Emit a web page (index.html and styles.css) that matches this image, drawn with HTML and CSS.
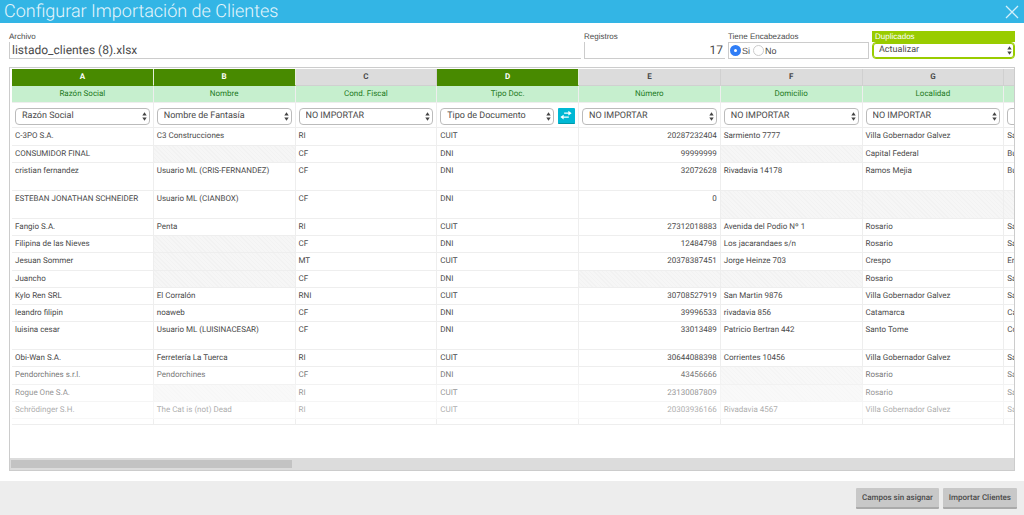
FILE: index.html
```
<!DOCTYPE html>
<html lang="es">
<head>
<meta charset="utf-8">
<title>Configurar Importación de Clientes</title>
<meta name="viewport" content="width=device-width, initial-scale=1">
<link rel="stylesheet" href="styles.css">
</head>
<body>
<svg class="symbols" aria-hidden="true">
  <symbol id="arrows" viewBox="0 0 5 9"><path d="M2.5 0.3 4.7 3.6H.3zM2.5 8.7 4.7 5.4H.3z" fill="#444"/></symbol>
</svg>
<header class="titlebar">
  <h1>Configurar Importación de Clientes</h1>
  <button class="close" type="button" aria-label="Cerrar"><svg viewBox="0 0 14 14"><path d="M1 1 13 13M13 1 1 13" stroke="#d4f0fb" stroke-width="1.3" fill="none"/></svg></button>
</header>
<main class="content">
  <form class="fields">
    <div class="field">
      <label for="archivo">Archivo</label>
      <input class="box" id="archivo" type="text" value="listado_clientes (8).xlsx" readonly>
    </div>
    <div class="field">
      <label for="registros">Registros</label>
      <input class="box right" id="registros" type="text" value="17" readonly>
    </div>
    <fieldset class="field">
      <legend>Tiene Encabezados</legend>
      <div class="box radios">
        <input type="radio" name="enc" id="si" checked><label for="si">Si</label>
        <input type="radio" name="enc" id="no"><label for="no">No</label>
      </div>
    </fieldset>
    <div class="field active">
      <label for="dup">Duplicados</label>
      <span class="select"><select id="dup"><option>Actualizar</option></select><svg><use href="#arrows"/></svg></span>
    </div>
  </form>
  <section class="sheet">
    <div class="viewport">
      <table>
        <thead>
          <tr class="letters"><th class="on">A</th><th class="on">B</th><th>C</th><th class="on">D</th><th>E</th><th>F</th><th>G</th><th></th></tr>
          <tr class="names"><th>Razón Social</th><th>Nombre</th><th>Cond. Fiscal</th><th>Tipo Doc.</th><th>Número</th><th>Domicilio</th><th>Localidad</th><th></th></tr>
          <tr class="mapping">
            <td><span class="select"><select aria-label="Columna A"><option>Razón Social</option></select><svg><use href="#arrows"/></svg></span></td>
            <td><span class="select"><select aria-label="Columna B"><option>Nombre de Fantasía</option></select><svg><use href="#arrows"/></svg></span></td>
            <td><span class="select"><select aria-label="Columna C"><option>NO IMPORTAR</option></select><svg><use href="#arrows"/></svg></span></td>
            <td><div class="pair"><span class="select"><select aria-label="Columna D"><option>Tipo de Documento</option></select><svg><use href="#arrows"/></svg></span><button class="swap" type="button" aria-label="Asignar valores"><svg viewBox="0 0 16 16"><path d="M6 5.500h5M5 9.700h6" stroke="#fff" stroke-width="1.300"/><path d="M10.500 3 14 5.500 10.500 8zM5.500 7.200 2 9.700l3.500 2.500z" fill="#fff"/></svg></button></div></td>
            <td><span class="select"><select aria-label="Columna E"><option>NO IMPORTAR</option></select><svg><use href="#arrows"/></svg></span></td>
            <td><span class="select"><select aria-label="Columna F"><option>NO IMPORTAR</option></select><svg><use href="#arrows"/></svg></span></td>
            <td><span class="select"><select aria-label="Columna G"><option>NO IMPORTAR</option></select><svg><use href="#arrows"/></svg></span></td>
            <td><span class="select"><select aria-label="Columna H"><option></option></select><svg><use href="#arrows"/></svg></span></td>
          </tr>
        </thead>
        <tbody>
          <tr><td>C-3PO S.A.</td><td>C3 Construcciones</td><td>RI</td><td>CUIT</td><td>20287232404</td><td>Sarmiento 7777</td><td>Villa Gobernador Galvez</td><td>Sa</td></tr>
          <tr><td>CONSUMIDOR FINAL</td><td></td><td>CF</td><td>DNI</td><td>99999999</td><td></td><td>Capital Federal</td><td>Bu</td></tr>
          <tr class="tall"><td>cristian fernandez</td><td>Usuario ML (CRIS-FERNANDEZ)</td><td>CF</td><td>DNI</td><td>32072628</td><td>Rivadavia 14178</td><td>Ramos Mejia</td><td>Bu</td></tr>
          <tr class="tall"><td>ESTEBAN JONATHAN SCHNEIDER</td><td>Usuario ML (CIANBOX)</td><td>CF</td><td>DNI</td><td>0</td><td></td><td></td><td></td></tr>
          <tr><td>Fangio S.A.</td><td>Penta</td><td>RI</td><td>CUIT</td><td>27312018883</td><td>Avenida del Podio Nº 1</td><td>Rosario</td><td>Sa</td></tr>
          <tr><td>Filipina de las Nieves</td><td></td><td>CF</td><td>DNI</td><td>12484798</td><td>Los jacarandaes s/n</td><td>Rosario</td><td>Sa</td></tr>
          <tr><td>Jesuan Sommer</td><td></td><td>MT</td><td>CUIT</td><td>20378387451</td><td>Jorge Heinze 703</td><td>Crespo</td><td>En</td></tr>
          <tr><td>Juancho</td><td></td><td>CF</td><td>DNI</td><td></td><td></td><td>Rosario</td><td>Sa</td></tr>
          <tr><td>Kylo Ren SRL</td><td>El Corralón</td><td>RNI</td><td>CUIT</td><td>30708527919</td><td>San Martin 9876</td><td>Villa Gobernador Galvez</td><td>Sa</td></tr>
          <tr><td>leandro filipin</td><td>noaweb</td><td>CF</td><td>DNI</td><td>39996533</td><td>rivadavia 856</td><td>Catamarca</td><td>Ca</td></tr>
          <tr class="tall"><td>luisina cesar</td><td>Usuario ML (LUISINACESAR)</td><td>CF</td><td>DNI</td><td>33013489</td><td>Patricio Bertran 442</td><td>Santo Tome</td><td>Co</td></tr>
          <tr><td>Obi-Wan S.A.</td><td>Ferretería La Tuerca</td><td>RI</td><td>CUIT</td><td>30644088398</td><td>Corrientes 10456</td><td>Villa Gobernador Galvez</td><td>Sa</td></tr>
          <tr class="fade1"><td>Pendorchines s.r.l.</td><td>Pendorchines</td><td>CF</td><td>DNI</td><td>43456666</td><td></td><td>Rosario</td><td>Sa</td></tr>
          <tr class="fade2"><td>Rogue One S.A.</td><td></td><td>RI</td><td>CUIT</td><td>23130087809</td><td></td><td>Rosario</td><td>Sa</td></tr>
          <tr class="fade3"><td>Schrödinger S.H.</td><td>The Cat is (not) Dead</td><td>RI</td><td>CUIT</td><td>20303936166</td><td>Rivadavia 4567</td><td>Villa Gobernador Galvez</td><td>Sa</td></tr>
        </tbody>
        <tfoot><tr><td></td><td></td><td></td><td></td><td></td><td></td><td></td><td></td></tr></tfoot>
      </table>
    </div>
    <div class="scrollbar"><div class="thumb"></div></div>
  </section>
</main>
<footer class="actions">
  <button type="button">Campos sin asignar</button>
  <button type="button">Importar Clientes</button>
</footer>
</body>
</html>
```
FILE: styles.css
```
* { box-sizing: border-box; }
body {
  margin: 0;
  min-height: 100vh;
  display: flex;
  flex-direction: column;
  background: #fff;
  color: #4a4a4a;
  font-family: Roboto, "Liberation Sans", sans-serif;
  font-size: 8px;
  text-rendering: geometricPrecision;
}
button, input, select { font-family: inherit; color: inherit; margin: 0; text-rendering: inherit; }
.symbols { display: none; }
.titlebar {
  display: flex;
  align-items: center;
  justify-content: space-between;
  height: 23px;
  padding: 0 5px 0 4px;
  background: #33b5e5;
}
.titlebar h1 { margin: 0; font-size: 18px; font-weight: 300; line-height: 23px; color: #e6f6fc; }
.close { width: 14px; height: 14px; padding: 0; border: 0; background: none; }
.close svg { display: block; }
.content { flex: 1; display: flex; flex-direction: column; padding: 8px 9px 10px; }
.fields { display: grid; grid-template-columns: 1fr 141px 141px 143px; gap: 3px; margin: 0 0 8px; }
.field { min-width: 0; margin: 0; padding: 0; border: 0; }
.field > label, legend {
  display: block;
  width: 100%;
  height: 11px;
  padding: 0;
  line-height: 11px;
  font-family: "Liberation Sans", sans-serif;
}
.box {
  display: block;
  width: 100%;
  height: 17px;
  padding: 0 2px;
  border: 1px solid #ccc;
  border-width: 0 0 1px 1px;
  background: #fff;
  font-size: 12px;
  outline: 0;
}
.right { text-align: right; }
.radios {
  display: flex;
  align-items: center;
  gap: 1px;
  padding: 0 1px;
  border-width: 1px;
  font-family: "Liberation Sans", sans-serif;
  font-size: 9px;
}
.radios input {
  appearance: none;
  width: 11px;
  height: 11px;
  border: 1px solid #ccc;
  border-radius: 50%;
  background: #fff;
}
.radios input:checked { border: 4px solid #2f7df6; }
.radios label { margin-right: 2px; }
.active > label { padding-left: 3px; background: #9c0; color: #fff; }
.select { position: relative; display: block; flex: 1; min-width: 0; }
.select select {
  appearance: none;
  display: block;
  width: 100%;
  height: 17px;
  padding: 0 12px 0 6px;
  border: 1px solid #bbb;
  border-radius: 4px;
  background: #fff;
  font-size: 9px;
  line-height: 15px;
}
.select svg { position: absolute; right: 3px; top: 4px; width: 5px; height: 9px; pointer-events: none; }
.active select { border-color: #9c0; box-shadow: inset 0 0 0 1px #9c0; }
.sheet {
  flex: 1;
  display: flex;
  flex-direction: column;
  border: 1px solid #ccc;
}
.viewport { flex: 1; overflow: hidden; padding: 1px 0 0 2px; }
table { width: 1134px; table-layout: fixed; border-collapse: separate; border-spacing: 0; }
th, td {
  padding: 0 3px;
  border-right: 1px solid #eee;
  border-bottom: 1px solid #eee;
  text-align: left;
  vertical-align: top;
  line-height: 16px;
  white-space: nowrap;
}
.letters th { height: 17px; border-color: #d0d0d0; background: #dcdcdc; text-align: center; font-weight: 700; }
.letters .on { border-color: #e4efdb; border-bottom-color: #488a00; background: #488a00; color: #fff; }
.names th { height: 17px; background: #c6efce; color: #1d7a1d; text-align: center; font-weight: 400; }
.mapping td { height: 25px; padding-top: 5px; }
.pair { display: flex; gap: 4px; }
.swap {
  width: 17px;
  height: 16px;
  padding: 0;
  border: 0;
  border-bottom: 1px solid #0097a7;
  border-radius: 1px;
  background: #00b8d4;
}
.swap svg { display: block; width: 16px; height: 15px; }
tbody td { height: 17px; }
tbody tr:nth-child(6n+1) td { height: 18px; }
tbody .tall td { height: 28px; }
tbody td:nth-child(5) { text-align: right; }
tbody td:empty { background: repeating-linear-gradient(45deg, #f2f2f2 0 1px, #f6f6f6 1px 3px); }
.fade1 { opacity: .75; }
.fade2 { opacity: .58; }
.fade3 { opacity: .45; }
tfoot td { height: 6px; line-height: 5px; }
.scrollbar { height: 12px; padding: 2px 1px; background: #dcdcdc; }
.thumb { width: 28%; height: 8px; background: #c3c3c3; }
.actions {
  display: flex;
  justify-content: flex-end;
  align-items: center;
  gap: 4px;
  height: 34px;
  padding: 0 7px;
  background: #ededed;
}
.actions button {
  height: 21px;
  padding: 0 6px;
  border: 0;
  border-bottom: 2px solid #aaa;
  border-radius: 1px;
  background: #c8c8c8;
  font-size: 8px;
  font-weight: 500;
}
```
